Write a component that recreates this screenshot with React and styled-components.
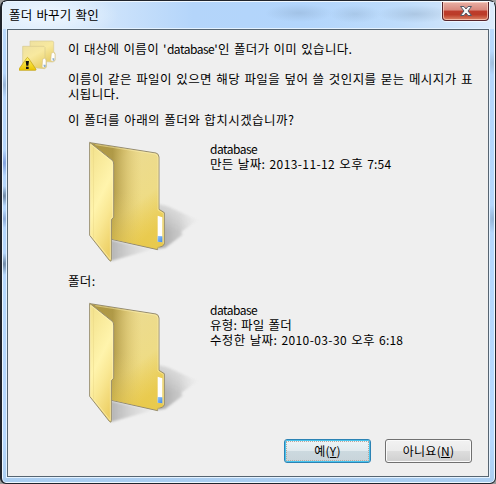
import React from "react";
import styled, { createGlobalStyle } from "styled-components";

const Global = createGlobalStyle`
  * { box-sizing: border-box; }
  body { margin: 0; background: #9c9c9c; overflow: hidden; }
`;

const Frame = styled.div`
  width: 496px;
  height: 484px;
  display: flex;
  flex-direction: column;
  padding: 1px 0 0;
  border: 1px solid #20242c;
  border-left-width: 2px;
  border-radius: 7px 7px 6px 6px;
  font: 12px/15px "Noto Sans CJK KR", "Noto Sans", sans-serif;
  color: #000;
  box-shadow: inset 0 0 0 1px #eef7ff;
  background:
    radial-gradient(ellipse 8px 13px at 2px 162px, #7f9fdc 0%, transparent 100%),
    radial-gradient(ellipse 8px 10px at 2px 195px, #6e87a3 0%, transparent 100%),
    radial-gradient(ellipse 8px 9px at 2px 218px, #8ba9d6 0%, transparent 100%),
    radial-gradient(ellipse 8px 11px at 2px 263px, #6e87a3 0%, transparent 100%),
    radial-gradient(ellipse 8px 14px at 491px 218px, #94b4d6 0%, transparent 100%),
    radial-gradient(ellipse 8px 12px at 2px 84px, #96b3d5 0%, transparent 100%),
    radial-gradient(ellipse 8px 12px at 491px 62px, #9fbddb 0%, transparent 100%),
    linear-gradient(180deg, #c0dcfa 0, #b4d6fc 60px, #b6d8fe 440px, #aacdf0 100%);
`;

const TitleBar = styled.header`
  height: 27px;
  flex: none;
  display: flex;
  justify-content: space-between;
  align-items: flex-start;
  padding: 0 6px;
  margin: 0 1px;
  background:
    radial-gradient(ellipse 34px 9px at 296px 11px, rgba(132, 160, 190, 0.35), transparent),
    radial-gradient(ellipse 26px 9px at 352px 12px, rgba(132, 160, 190, 0.3), transparent),
    radial-gradient(ellipse 38px 9px at 412px 12px, rgba(140, 165, 192, 0.4), transparent),
    radial-gradient(ellipse 72px 24px at 44px 13px, rgba(240, 248, 255, 0.8) 20%, transparent),
    linear-gradient(90deg, #dcebfb 0, #cfe4fb 100px, #b4d5fa 190px, #b2d5fc 300px, #bedcfb 400px, #dcebfb 100%);
`;

const Title = styled.span`
  padding-top: 5px;
  font-size: 12.5px;
  letter-spacing: 0.15px;
  word-spacing: 1.2px;
  white-space: pre;
`;

const CloseButton = styled.button`
  width: 47px;
  height: 19px;
  margin-right: -1px;
  padding: 0;
  display: flex;
  align-items: center;
  justify-content: center;
  border: 1px solid #57242a;
  border-top: 0;
  border-radius: 0 0 4px 4px;
  box-shadow: inset 0 0 0 1px rgba(255, 218, 205, 0.65), 0 0 1px 1px rgba(255, 255, 255, 0.7);
  background: linear-gradient(180deg, #e8b0a5 0, #d9887c 45%, #bd3c2d 50%, #bb3b27 70%, #dc8568 100%);
`;

const Client = styled.main`
  flex: 1;
  margin: 0 6px 6px 5px;
  border: 1px solid #566572;
  outline: 1px solid #e4f2ff;
  background: #efefef;
  display: flex;
  flex-direction: column;
`;

const Intro = styled.section`
  display: flex;
  height: 100px;
  padding-top: 10px;
`;

const WarningSlot = styled.div`
  width: 60px;
  flex: none;
  padding-left: 11px;
`;

const Copy = styled.div`
  display: flex;
  flex-direction: column;
`;

const Line = styled.span`
  display: block;
  height: 15px;
  white-space: pre;
  font-size: 12.5px;
  letter-spacing: ${(p) => p.$track ?? 0.35}px;
  word-spacing: 1px;
  margin-top: ${(p) => p.$gap || 0}px;
`;

const Latin = styled.span`
  font-size: 12px;
  letter-spacing: ${(p) => p.$track ?? -0.5}px;
`;

const Item = styled.section`
  display: flex;
  height: 140px;
  padding-left: 62px;
`;

const Details = styled.div`
  padding-top: 11px;
`;

const Caption = styled.div`
  height: 21px;
  padding: 3px 0 0 60px;
  font-size: 12.5px;
  letter-spacing: 0.35px;
`;

const Actions = styled.footer`
  display: flex;
  gap: 14px;
  justify-content: flex-end;
  padding: 8px 16px 0 0;
`;

const Button = styled.button`
  width: 87px;
  height: 24px;
  padding: 0 0 1px;
  font: inherit;
  color: #000;
  letter-spacing: 0.25px;
  border-radius: 3px;
  border: 1px solid ${(p) => (p.$primary ? "#2c83b4" : "#707070")};
  box-shadow: inset 0 0 0 1px ${(p) => (p.$primary ? "#48c4ee" : "#fafafa")};
  background: ${(p) =>
    p.$primary
      ? "linear-gradient(180deg, #eef4f6 0, #e1eaee 48%, #ccd9df 52%, #c8d4da 100%)"
      : "linear-gradient(180deg, #f2f2f2 0, #ebebeb 48%, #dddddd 52%, #cfcfcf 100%)"};
  outline: ${(p) => (p.$primary ? "1px dotted #b9a99d" : "none")};
  outline-offset: -3px;

  u { text-underline-offset: 1px; text-decoration-thickness: 1px; }
`;

const Drawing = styled.svg`
  display: block;
  flex: none;
`;

function BigFolder({ id }) {
  return (
    <Drawing width="140" height="140" viewBox="0 0 420 420">
      <defs>
        <linearGradient id={`${id}back`} x1="0" y1="0" x2=".55" y2="1">
          <stop offset="0" stopColor="#dcc56a" />
          <stop offset=".3" stopColor="#ecdb90" />
          <stop offset=".7" stopColor="#eedc86" />
          <stop offset="1" stopColor="#e9c947" />
        </linearGradient>
        <linearGradient id={`${id}shade`} x1="128" x2="215" y1="0" y2="0" gradientUnits="userSpaceOnUse">
          <stop offset="0" stopColor="#a28b38" stopOpacity=".8" />
          <stop offset=".4" stopColor="#bca34c" stopOpacity=".5" />
          <stop offset="1" stopColor="#dfc66a" stopOpacity="0" />
        </linearGradient>
        <linearGradient id={`${id}fade`} x1="0" x2="0" y1="0" y2="1">
          <stop offset=".45" stopColor="#ecd473" stopOpacity="0" />
          <stop offset="1" stopColor="#e8ca50" stopOpacity=".85" />
        </linearGradient>
        <linearGradient id={`${id}front`} x1=".2" y1="0" x2=".6" y2="1">
          <stop offset="0" stopColor="#f3e28d" />
          <stop offset=".48" stopColor="#fff4ac" />
          <stop offset=".7" stopColor="#f9e792" />
          <stop offset="1" stopColor="#edd066" />
        </linearGradient>
        <linearGradient id={`${id}shadow`} x1="270" x2="385" y1="0" y2="0" gradientUnits="userSpaceOnUse">
          <stop offset="0" stopColor="#777" stopOpacity=".6" />
          <stop offset=".5" stopColor="#999" stopOpacity=".45" />
          <stop offset="1" stopColor="#ccc" stopOpacity=".05" />
        </linearGradient>
        <linearGradient id={`${id}down`} x1="0" x2="0" y1="0" y2="1">
          <stop offset="0" stopColor="#fff" stopOpacity=".25" />
          <stop offset=".6" stopColor="#fff" />
        </linearGradient>
        <mask id={`${id}mask`}>
          <rect x="255" y="215" width="140" height="150" fill={`url(#${id}down)`} />
        </mask>
        <linearGradient id={`${id}low`} x1="120" x2="250" y1="0" y2="0" gradientUnits="userSpaceOnUse">
          <stop offset="0" stopColor="#888" stopOpacity=".6" />
          <stop offset="1" stopColor="#ccc" stopOpacity=".15" />
        </linearGradient>
        <linearGradient id={`${id}label`} x1="0" x2="1" y1="0" y2="1">
          <stop offset="0" stopColor="#94c6ff" />
          <stop offset="1" stopColor="#3f86e5" />
        </linearGradient>
        <filter id={`${id}soft`}><feGaussianBlur stdDeviation="3" /></filter>
      </defs>
      <g mask={`url(#${id}mask)`}>
        <path d="M267 222 L292 228 L382 270 L334 305 L338 314 L286 353 L264 356Z" fill={`url(#${id}shadow)`} filter={`url(#${id}soft)`} />
      </g>
      <path d="M122 330 L250 357 L195 373 L123 393Z" fill={`url(#${id}low)`} filter={`url(#${id}soft)`} />
      <path d="M60 38 L258 69 Q266 71 267 81 L267 238 L283 248 L283 342 L277 349 L263 352 L263 359 L124 328Z" fill={`url(#${id}back)`} stroke="#968d72" strokeWidth="3" />
      <path d="M60 39 L228 66 L222 348 L125 326Z" fill={`url(#${id}shade)`} />
      <path d="M125 50 L264 75 L264 240 L281 250 L281 341 L262 356 L125 326Z" fill={`url(#${id}fade)`} opacity=".7" />
      <path d="M76 44 L255 72 Q263 74 264 83 L264 240 L280 250 L280 341" fill="none" stroke="#fff2b8" strokeWidth="2" opacity=".75" />
      <path d="M263 257 L277 262 L277 337 L263 335Z" fill="#fff" />
      <path d="M263 318 L277 319 L277 337 L263 335Z" fill={`url(#${id}label)`} />
      <path d="M59 37 L127 91 Q131 95 131 102 L131 262 L124 269 L124 389 Q124 397 118 391 L59 316Z" fill={`url(#${id}front)`} stroke="#968d70" strokeWidth="3" />
      <path d="M62 43 L124 93 Q128 97 128 104 L128 260 L121 268 L121 388 L62 314Z" fill="none" stroke="#fff4b8" strokeWidth="2" opacity=".9" />
      <path d="M71 52 V326" stroke="#e2cf80" strokeWidth="2" opacity=".65" />
    </Drawing>
  );
}

function WarningFolders() {
  return (
    <Drawing width="40" height="34" viewBox="0 0 120 102">
      <defs>
        <linearGradient id="smallFolder" x2=".6" y2="1">
          <stop stopColor="#eee0a0" />
          <stop offset=".5" stopColor="#f8e99f" />
          <stop offset="1" stopColor="#e9d16c" />
        </linearGradient>
        <linearGradient id="warningFill" x2="0" y2="1">
          <stop stopColor="#fff46b" />
          <stop offset="1" stopColor="#eac400" />
        </linearGradient>
      </defs>
      <path d="M33 3 H101 L104 6 V36 L108 39 V62 L102 66 L33 63Z" fill="url(#smallFolder)" stroke="#d9cc96" strokeWidth="2" />
      <path d="M97 40 L103 37 L108 42 V60 L103 65 L95 62Z" fill="#fff" stroke="#d6c389" strokeWidth="2" />
      <path d="M100 55 H106 V61 L102 63Z" fill="#8caed0" />
      <path d="M11 19 H75 L78 22 V52 L82 56 V82 L77 86 L11 80Z" fill="url(#smallFolder)" stroke="#d6c88c" strokeWidth="2" />
      <path d="M71 57 L77 55 L81 59 V80 L75 84 L69 81Z" fill="#fff" stroke="#d6c389" strokeWidth="2" />
      <path d="M73 74 H80 V80 L75 82Z" fill="#8caed0" />
      <path d="M24 53 Q26 51 28 54 L51 88 Q52 91 48 91 H2 Q-2 91 0 87Z" fill="url(#warningFill)" stroke="#bf9d0e" strokeWidth="2" />
      <path d="M20 63 H30 L28 77 H22Z M21 80 H29 V87 H21Z" fill="#111" />
    </Drawing>
  );
}

function CloseIcon() {
  return (
    <Drawing width="14" height="12" viewBox="0 0 14 12">
      <path d="M1.5 1.5H5L7 4L9 1.5H12.5L9 6L12.5 10.5H9L7 8L5 10.5H1.5L5 6Z" fill="#f8f8f8" stroke="#525967" strokeWidth="1" />
    </Drawing>
  );
}

export default function App() {
  return (
    <>
      <Global />
      <Frame>
        <TitleBar>
          <Title>폴더 바꾸기 확인</Title>
          <CloseButton aria-label="닫기"><CloseIcon /></CloseButton>
        </TitleBar>
        <Client>
          <Intro>
            <WarningSlot><WarningFolders /></WarningSlot>
            <Copy>
              <Line $gap={1} $track={0.32}>이 대상에 이름이 '<Latin>database</Latin>'인 폴더가 이미 있습니다.</Line>
              <Line $gap={15} $track={0.44}>이름이 같은 파일이 있으면 해당 파일을 덮어 쓸 것인지를 묻는 메시지가 표</Line>
              <Line>시됩니다.</Line>
              <Line $gap={11} $track={0.44}>이 폴더를 아래의 폴더와 합치시겠습니까?</Line>
            </Copy>
          </Intro>
          <Item>
            <BigFolder id="source" />
            <Details>
              <Line><Latin>database</Latin></Line>
              <Line>만든 날짜: <Latin $track={0.4}>2013-11-12</Latin> 오후 <Latin $track={0.2}>7:54</Latin></Line>
            </Details>
          </Item>
          <Caption>폴더:</Caption>
          <Item>
            <BigFolder id="target" />
            <Details>
              <Line><Latin>database</Latin></Line>
              <Line $track={0.2}>유형: 파일 폴더</Line>
              <Line>수정한 날짜: <Latin $track={0.4}>2010-03-30</Latin> 오후 <Latin $track={0.2}>6:18</Latin></Line>
            </Details>
          </Item>
          <Actions>
            <Button $primary>예(<u>Y</u>)</Button>
            <Button>아니요(<u>N</u>)</Button>
          </Actions>
        </Client>
      </Frame>
    </>
  );
}
